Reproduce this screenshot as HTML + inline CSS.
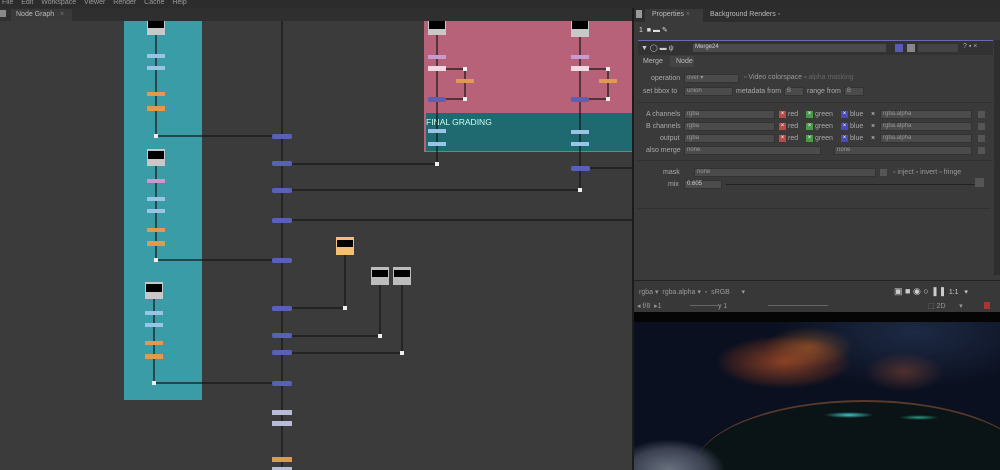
<!DOCTYPE html>
<html><head><meta charset="utf-8"><style>
*{margin:0;padding:0;box-sizing:border-box}
html{width:1000px;height:470px;overflow:hidden}
body{width:1000px;height:470px;overflow:hidden;background:#3a3a3a;font-family:"Liberation Sans",sans-serif;position:relative;font-size:7px;color:#bbb}
.a{position:absolute}
.t{position:absolute;white-space:nowrap;font-size:7px;color:#aaa}
.fld{position:absolute;height:9px;background:#4b4b4b;border:1px solid #333;font-size:6px;color:#999;padding-left:2px;line-height:7px}
.cb{position:absolute;width:7px;height:7px;font-size:6px;line-height:7px;text-align:center;color:#fff}
</style></head><body>
<div class="a" style="left:0;top:0;width:1000px;height:8px;background:#2c2c2c"></div>
<div class="t" style="left:2px;top:-1px;font-size:7px;color:#999;word-spacing:6px">File Edit Workspace Viewer Render Cache Help</div>
<div class="a" style="left:0;top:8px;width:632px;height:13px;background:#2f2f2f"></div>
<div class="a" style="left:0;top:10px;width:6px;height:7px;background:#888"></div>
<div class="a" style="left:11px;top:9px;width:61px;height:12px;background:#3a3a3a"></div>
<div class="t" style="left:16px;top:11px;color:#bbb">Node Graph &nbsp; <span style="color:#777">×</span></div>
<svg class="a" style="left:0;top:21px" width="633" height="449" viewBox="0 21 633 449">
<rect x="0" y="21" width="633" height="449" fill="#3b3b3b"/>
<rect x="124" y="21" width="78" height="379" fill="#3a9ca6"/>
<rect x="424" y="21" width="209" height="131" fill="#b8627a"/>
<rect x="426" y="113" width="207" height="38" fill="#1e6a70"/>
<text x="426" y="125" font-size="8.5" fill="#cfe" font-family="Liberation Sans">FINAL GRADING</text>
<g stroke="#151515" stroke-width="1.2" fill="none">
<line x1="282" y1="21" x2="282" y2="470"/>
<line x1="156" y1="35" x2="156" y2="136"/><line x1="156" y1="136" x2="282" y2="136"/>
<line x1="156" y1="166" x2="156" y2="260"/><line x1="156" y1="260" x2="282" y2="260"/>
<line x1="154" y1="298" x2="154" y2="383"/><line x1="154" y1="383" x2="282" y2="383"/>
<line x1="437" y1="35" x2="437" y2="164"/><line x1="282" y1="164" x2="437" y2="164"/>
<line x1="580" y1="37" x2="580" y2="190"/><line x1="282" y1="190" x2="580" y2="190"/>
<line x1="282" y1="220" x2="633" y2="220"/><line x1="590" y1="168" x2="633" y2="168"/>
<line x1="446" y1="69" x2="465" y2="69"/><line x1="465" y1="69" x2="465" y2="99"/><line x1="446" y1="99" x2="465" y2="99"/>
<line x1="589" y1="69" x2="608" y2="69"/><line x1="608" y1="69" x2="608" y2="99"/><line x1="589" y1="99" x2="608" y2="99"/>
<line x1="345" y1="255" x2="345" y2="308"/><line x1="282" y1="308" x2="345" y2="308"/>
<line x1="380" y1="285" x2="380" y2="336"/><line x1="282" y1="336" x2="380" y2="336"/>
<line x1="402" y1="285" x2="402" y2="353"/><line x1="282" y1="353" x2="402" y2="353"/>
</g>
<g fill="#eee"><rect x="154" y="134" width="4" height="4"/><rect x="154" y="258" width="4" height="4"/><rect x="152" y="381" width="4" height="4"/><rect x="435" y="162" width="4" height="4"/><rect x="578" y="188" width="4" height="4"/><rect x="343" y="306" width="4" height="4"/><rect x="378" y="334" width="4" height="4"/><rect x="400" y="351" width="4" height="4"/><rect x="463" y="67" width="4" height="4"/><rect x="463" y="97" width="4" height="4"/><rect x="606" y="67" width="4" height="4"/><rect x="606" y="97" width="4" height="4"/></g>
<g>
<rect x="147" y="21" width="18" height="14" fill="#c8c8c8"/><rect x="148" y="21" width="16" height="7" fill="#000"/>
<rect x="147" y="149" width="18" height="17" fill="#c8c8c8"/><rect x="148" y="151" width="16" height="8" fill="#000"/>
<rect x="145" y="282" width="18" height="17" fill="#c8c8c8"/><rect x="146" y="284" width="16" height="8" fill="#000"/>
<rect x="428" y="21" width="18" height="14" fill="#c8c8c8"/><rect x="429" y="21" width="16" height="8" fill="#000"/>
<rect x="571" y="21" width="18" height="16" fill="#c8c8c8"/><rect x="572" y="21" width="16" height="8" fill="#000"/>
<rect x="336" y="237" width="18" height="18" fill="#f5c070"/><rect x="337" y="240" width="16" height="7" fill="#000"/>
<rect x="371" y="267" width="18" height="18" fill="#bcbcbc"/><rect x="372" y="270" width="16" height="7" fill="#000"/>
<rect x="393" y="267" width="18" height="18" fill="#bcbcbc"/><rect x="394" y="270" width="16" height="7" fill="#000"/>
</g>
<g fill="#9ac4e6">
<rect x="147" y="54" width="18" height="4"/><rect x="147" y="66" width="18" height="4"/>
<rect x="147" y="197" width="18" height="4"/><rect x="147" y="209" width="18" height="4"/>
<rect x="145" y="311" width="18" height="4"/><rect x="145" y="323" width="18" height="4"/>
<rect x="428" y="129" width="18" height="4"/><rect x="428" y="142" width="18" height="4"/>
<rect x="571" y="130" width="18" height="4"/><rect x="571" y="142" width="18" height="4"/>
</g>
<g fill="#c89ad0"><rect x="147" y="179" width="18" height="4"/><rect x="428" y="55" width="18" height="4"/><rect x="571" y="55" width="18" height="4"/></g>
<g fill="#f2d8e0"><rect x="428" y="66" width="18" height="5"/><rect x="571" y="66" width="18" height="5"/></g>
<g fill="#e19a4a">
<rect x="147" y="92" width="18" height="4"/><rect x="147" y="106" width="18" height="5"/>
<rect x="147" y="228" width="18" height="4"/><rect x="147" y="241" width="18" height="5"/>
<rect x="145" y="341" width="18" height="4"/><rect x="145" y="354" width="18" height="5"/>
<rect x="456" y="79" width="18" height="4"/><rect x="599" y="79" width="18" height="4"/>
<rect x="272" y="457" width="20" height="5"/>
</g>
<g fill="#5860b8">
<rect x="272" y="134" width="20" height="5" rx="2"/><rect x="272" y="161" width="20" height="5" rx="2"/><rect x="272" y="188" width="20" height="5" rx="2"/><rect x="272" y="218" width="20" height="5" rx="2"/><rect x="272" y="258" width="20" height="5" rx="2"/><rect x="272" y="306" width="20" height="5" rx="2"/><rect x="272" y="333" width="20" height="5" rx="2"/><rect x="272" y="350" width="20" height="5" rx="2"/><rect x="272" y="381" width="20" height="5" rx="2"/>
<rect x="428" y="97" width="18" height="5" rx="2"/><rect x="571" y="97" width="18" height="5" rx="2"/><rect x="571" y="166" width="19" height="5" rx="2"/>
</g>
<g fill="#b8bcd8"><rect x="272" y="410" width="20" height="5"/><rect x="272" y="421" width="20" height="5"/><rect x="272" y="467" width="20" height="3"/></g>
</svg>
<div class="a" style="left:632px;top:8px;width:2px;height:462px;background:#1c1c1c"></div>
<div class="a" style="left:634px;top:8px;width:366px;height:272px;background:#3a3a3a"></div>
<div class="a" style="left:634px;top:8px;width:366px;height:14px;background:#2d2d2d"></div>
<div class="a" style="left:636px;top:10px;width:6px;height:8px;background:#999"></div>
<div class="a" style="left:645px;top:9px;width:58px;height:13px;background:#3a3a3a"></div>
<div class="t" style="left:652px;top:11px;color:#bbb">Properties <span style="color:#777">×</span></div>
<div class="t" style="left:710px;top:11px;color:#bbb">Background Renders <span style="color:#666">▪</span></div>
<div class="t" style="left:639px;top:26px;color:#ddd">1 &nbsp;■ ▬ ✎</div>
<div class="a" style="left:638px;top:40px;width:355px;height:1px;background:#6a6ab0"></div>
<div class="a" style="left:638px;top:41px;width:355px;height:14px;background:#323232"></div>
<div class="t" style="left:641px;top:44px;color:#ccc">▼ ◯ ▬ ψ</div>
<div class="fld" style="left:692px;top:43px;width:195px;height:10px;color:#ccc">Merge24</div>
<div class="a" style="left:895px;top:44px;width:8px;height:8px;background:#5a5ab0"></div>
<div class="a" style="left:907px;top:44px;width:8px;height:8px;background:#888"></div>
<div class="a" style="left:918px;top:44px;width:40px;height:8px;background:#444"></div>
<div class="t" style="left:963px;top:43px;color:#aaa">? ▪ ×</div>
<div class="a" style="left:994px;top:40px;width:6px;height:235px;background:#2e2e2e"></div>
<div class="t" style="left:643px;top:58px;color:#bbb">Merge</div>
<div class="a" style="left:670px;top:56px;width:24px;height:11px;background:#444"></div>
<div class="t" style="left:676px;top:58px;color:#bbb">Node</div>
<div class="t" style="left:651px;top:75px">operation</div><div class="fld" style="left:684px;top:74px;width:55px">over ▾</div>
<div class="t" style="left:744px;top:74px;color:#999">▫ Video colorspace ▫ <span style="color:#666">alpha masking</span></div>
<div class="t" style="left:643px;top:88px">set bbox to</div><div class="fld" style="left:684px;top:87px;width:49px">union</div>
<div class="t" style="left:736px;top:88px">metadata from</div><div class="fld" style="left:784px;top:87px;width:20px">B</div>
<div class="t" style="left:807px;top:88px">range from</div><div class="fld" style="left:844px;top:87px;width:20px">B</div>
<div class="a" style="left:638px;top:102px;width:355px;height:1px;background:#303030"></div>
<div class="t" style="left:646px;top:111px">A channels</div>
<div class="t" style="left:646px;top:123px">B channels</div>
<div class="t" style="left:660px;top:135px">output</div>
<div class="t" style="left:646px;top:147px">also merge</div>
<div class="fld" style="left:684px;top:110px;width:91px">rgba</div>
<div class="fld" style="left:684px;top:122px;width:91px">rgba</div>
<div class="fld" style="left:684px;top:134px;width:91px">rgba</div>
<div class="fld" style="left:684px;top:146px;width:137px">none</div>
<div class="fld" style="left:834px;top:146px;width:138px">none</div>
<div class="cb" style="left:779px;top:111px;background:#b84a4a">×</div><div class="t" style="left:788px;top:111px">red</div>
<div class="cb" style="left:806px;top:111px;background:#4a9a4a">×</div><div class="t" style="left:815px;top:111px">green</div>
<div class="cb" style="left:841px;top:111px;background:#4a4ab8">×</div><div class="t" style="left:850px;top:111px">blue</div>
<div class="t" style="left:871px;top:111px;color:#ddd">×</div><div class="fld" style="left:880px;top:110px;width:92px">rgba.alpha</div>
<div class="cb" style="left:779px;top:123px;background:#b84a4a">×</div><div class="t" style="left:788px;top:123px">red</div>
<div class="cb" style="left:806px;top:123px;background:#4a9a4a">×</div><div class="t" style="left:815px;top:123px">green</div>
<div class="cb" style="left:841px;top:123px;background:#4a4ab8">×</div><div class="t" style="left:850px;top:123px">blue</div>
<div class="t" style="left:871px;top:123px;color:#ddd">×</div><div class="fld" style="left:880px;top:122px;width:92px">rgba.alpha</div>
<div class="cb" style="left:779px;top:135px;background:#b84a4a">×</div><div class="t" style="left:788px;top:135px">red</div>
<div class="cb" style="left:806px;top:135px;background:#4a9a4a">×</div><div class="t" style="left:815px;top:135px">green</div>
<div class="cb" style="left:841px;top:135px;background:#4a4ab8">×</div><div class="t" style="left:850px;top:135px">blue</div>
<div class="t" style="left:871px;top:135px;color:#ddd">×</div><div class="fld" style="left:880px;top:134px;width:92px">rgba.alpha</div>
<div class="a" style="left:978px;top:111px;width:7px;height:7px;background:#555"></div>
<div class="a" style="left:978px;top:123px;width:7px;height:7px;background:#555"></div>
<div class="a" style="left:978px;top:135px;width:7px;height:7px;background:#555"></div>
<div class="a" style="left:978px;top:147px;width:7px;height:7px;background:#555"></div>
<div class="a" style="left:638px;top:160px;width:355px;height:1px;background:#303030"></div>
<div class="t" style="left:663px;top:169px">mask</div><div class="fld" style="left:694px;top:168px;width:182px">none</div>
<div class="a" style="left:880px;top:169px;width:7px;height:7px;background:#555"></div>
<div class="t" style="left:893px;top:169px;color:#999">▫ inject ▫ invert ▫ fringe</div>
<div class="t" style="left:668px;top:181px">mix</div><div class="fld" style="left:684px;top:180px;width:38px;color:#ccc">0.605</div>
<div class="a" style="left:726px;top:184px;width:250px;height:1px;background:#222"></div>
<div class="a" style="left:975px;top:178px;width:9px;height:9px;background:#555"></div>
<div class="a" style="left:638px;top:208px;width:352px;height:1px;background:#303030"></div>
<div class="a" style="left:634px;top:280px;width:366px;height:1px;background:#222"></div>
<div class="a" style="left:634px;top:281px;width:366px;height:31px;background:#383838"></div>
<div class="t" style="left:639px;top:288px;color:#999">rgba ▾ &nbsp;rgba.alpha ▾ &nbsp;▫ &nbsp;sRGB &nbsp; &nbsp; &nbsp;▾</div>
<div class="t" style="left:894px;top:286px;color:#ccc;font-size:9px">▣ ■ ◉ ○ ❚❚ <span style="font-size:7px">1:1 &nbsp; ▾</span></div>
<div class="t" style="left:637px;top:302px;color:#999">◂ f/8 &nbsp;▸1 &nbsp; &nbsp; &nbsp; &nbsp; &nbsp; &nbsp; &nbsp; &nbsp; &nbsp; &nbsp; &nbsp; &nbsp; &nbsp; &nbsp; y 1</div>
<div class="a" style="left:690px;top:305px;width:30px;height:1px;background:#666"></div>
<div class="a" style="left:768px;top:305px;width:60px;height:1px;background:#666"></div>
<div class="t" style="left:928px;top:302px;color:#999">⬚ 2D &nbsp; &nbsp; &nbsp; ▾</div>
<div class="a" style="left:984px;top:302px;width:6px;height:7px;background:#a33"></div>
<div class="a" style="left:634px;top:312px;width:366px;height:10px;background:#050505"></div>
<div class="a" style="left:634px;top:322px;width:366px;height:148px;overflow:hidden;background:radial-gradient(ellipse 200px 80px at 280px 10px,#1d2a44,#0b1020 70%)">
 <div class="a" style="left:60px;top:5px;width:180px;height:70px;background:radial-gradient(ellipse 90px 35px at 90px 35px,rgba(180,80,40,.75),rgba(120,50,30,.3) 60%,transparent 75%)"></div>
 <div class="a" style="left:130px;top:5px;width:90px;height:40px;background:radial-gradient(ellipse at center,rgba(200,110,40,.5),transparent 70%)"></div>
 <div class="a" style="left:230px;top:30px;width:80px;height:40px;background:radial-gradient(ellipse at center,rgba(140,70,50,.5),transparent 70%)"></div>
 <div class="a" style="left:60px;top:78px;width:340px;height:70px;border-radius:50% 50% 0 0 / 100% 100% 0 0;background:#0a1416;border-top:2px solid #5a3a2a"></div>
 <div class="a" style="left:190px;top:90px;width:50px;height:6px;background:radial-gradient(ellipse at center,#3ccac8,transparent 70%)"></div>
 <div class="a" style="left:265px;top:93px;width:40px;height:5px;background:radial-gradient(ellipse at center,#2a9a80,transparent 70%)"></div>
 <div class="a" style="left:-20px;top:118px;width:110px;height:30px;border-radius:50% 50% 0 0;background:radial-gradient(ellipse at 50% 100%,#6a7280,#3a4050 50%,transparent 72%)"></div>
</div>
</body></html>
